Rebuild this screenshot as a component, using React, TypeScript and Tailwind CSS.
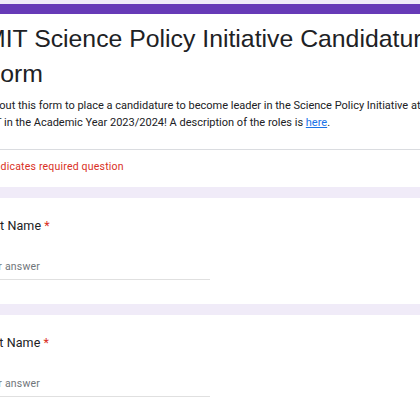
export default function App() {
  const body = "font-['Roboto',_'Liberation_Sans',_sans-serif]";

  const Question = ({ label }: { label: string }) => (
    <div className="bg-white pl-[40px] pt-[19px] pb-[24px]">
      <div className={`${body} -ml-[5px] text-[12.5px] leading-[18px] text-[#202124] tracking-[0.1px]`}>
        {label} <span className="text-[#d93025]">*</span>
      </div>
      <div className="mt-[24px] w-[226px] border-b border-[#e0e0e0] pb-[4px]">
        <span className={`${body} -ml-[4px] text-[10.5px] leading-[16px] text-[#70757a] tracking-[0.2px] block`}>
          Your answer
        </span>
      </div>
    </div>
  );

  return (
    <div className="w-[420px] h-[420px] overflow-hidden bg-[#f0ebf8]">
      <div className="pt-[4px] -ml-[56px] w-[720px] flex flex-col gap-[11px]">
        {/* header card */}
        <div className="bg-white border-t-[10px] border-[#673ab7]">
          <div className="pl-[40px] pt-[7px]">
            <h1 className="ml-[1px] font-['Liberation_Sans',_Arial,_sans-serif] text-[24.8px] leading-[35px] text-[#202124] whitespace-nowrap">
              MIT Science Policy Initiative Candidature
              <br />
              Form
            </h1>
            <p className={`${body} -ml-[1.5px] mt-[6px] text-[11px] leading-[17px] text-[#202124] whitespace-nowrap`}>
              Fill out this form to place a candidature to become leader in the Science Policy Initiative at
              <br />
              MIT in the Academic Year 2023/2024! A description of the roles is{" "}
              <a className="text-[#1a73e8] underline">here</a>.
            </p>
          </div>
          <div className="mt-[18px] border-t border-[#dadce0] pl-[40px] pt-[9px] pb-[12px]">
            <div className={`${body} text-[10.5px] leading-[16px] text-[#d93025] tracking-[0.2px]`}>
              * Indicates required question
            </div>
          </div>
        </div>

        <Question label="First Name" />
        <Question label="Last Name" />
      </div>
    </div>
  );
}
